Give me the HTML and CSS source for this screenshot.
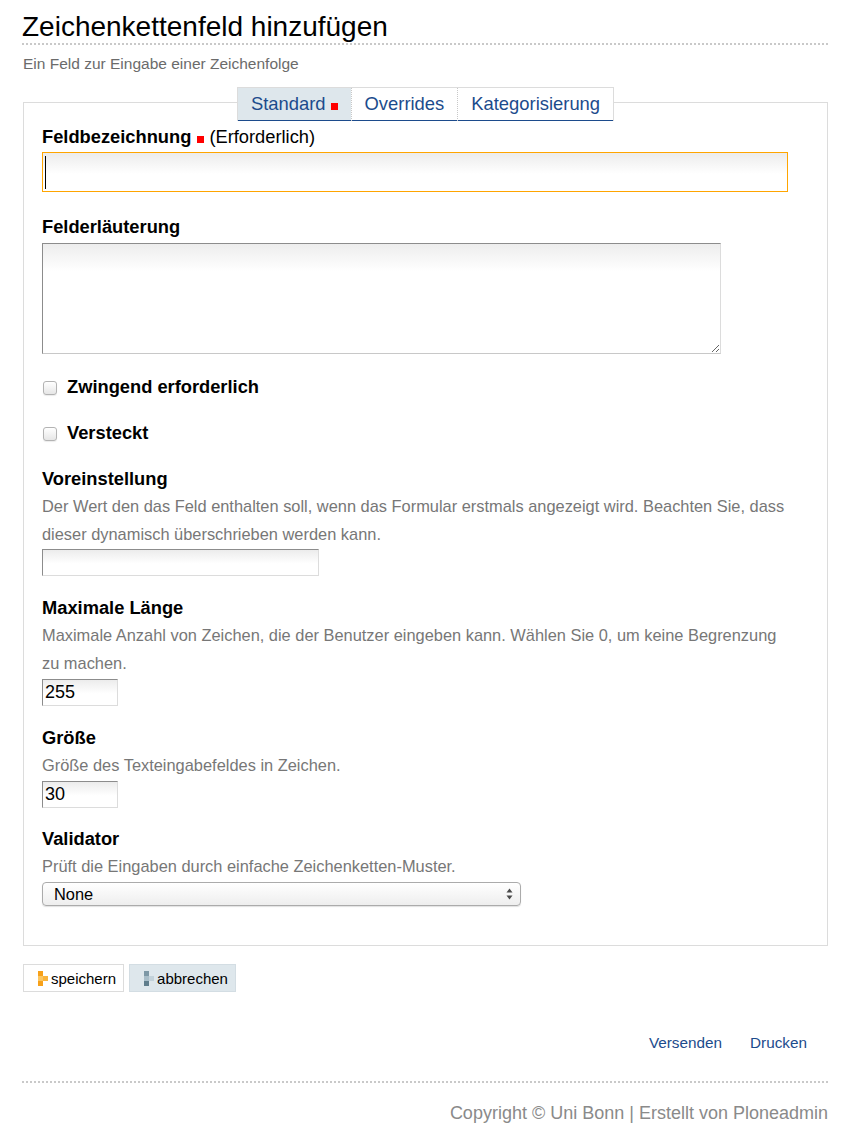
FILE: index.html
```html
<!DOCTYPE html>
<html lang="de">
<head>
<meta charset="utf-8">
<title>Zeichenkettenfeld hinzufügen</title>
<link rel="stylesheet" href="styles.css">
</head>
<body>
<div class="page">
  <h1 class="title">Zeichenkettenfeld hinzufügen</h1>
  <p class="lead">Ein Feld zur Eingabe einer Zeichenfolge</p>

  <form class="edit-form">
    <nav class="tabs">
      <div class="tab-list">
        <a class="tab is-selected" href="#">Standard<span class="req"></span></a>
        <a class="tab" href="#">Overrides</a>
        <a class="tab" href="#">Kategorisierung</a>
      </div>
    </nav>

    <div class="panel">
      <div class="fields">
        <div class="field field--first">
          <label class="field-label" for="title">Feldbezeichnung <span class="req req--label"></span><span class="required-note">(Erforderlich)</span></label>
          <div class="input-wrap">
            <input class="text-input text-input--focus" id="title" type="text">
            <span class="caret"></span>
          </div>
        </div>

        <div class="field field--area">
          <label class="field-label" for="description">Felderläuterung</label>
          <textarea class="textarea" id="description"></textarea>
        </div>

        <div class="field">
          <label class="check-row"><input class="checkbox" type="checkbox">Zwingend erforderlich</label>
        </div>

        <div class="field">
          <label class="check-row"><input class="checkbox" type="checkbox">Versteckt</label>
        </div>

        <div class="field">
          <label class="field-label" for="default">Voreinstellung</label>
          <p class="help">Der Wert den das Feld enthalten soll, wenn das Formular erstmals angezeigt wird. Beachten Sie, dass dieser dynamisch überschrieben werden kann.</p>
          <input class="text-input text-input--medium" id="default" type="text">
        </div>

        <div class="field">
          <label class="field-label" for="maxlength">Maximale Länge</label>
          <p class="help">Maximale Anzahl von Zeichen, die der Benutzer eingeben kann. Wählen Sie 0, um keine Begrenzung zu machen.</p>
          <input class="text-input text-input--small" id="maxlength" type="text" value="255">
        </div>

        <div class="field">
          <label class="field-label" for="size">Größe</label>
          <p class="help">Größe des Texteingabefeldes in Zeichen.</p>
          <input class="text-input text-input--small" id="size" type="text" value="30">
        </div>

        <div class="field field--last">
          <label class="field-label" for="validator">Validator</label>
          <p class="help">Prüft die Eingaben durch einfache Zeichenketten-Muster.</p>
          <div class="select-wrap">
            <select class="select" id="validator">
              <option>None</option>
            </select>
            <svg class="select-arrows" width="7" height="12" viewBox="0 0 7 12" aria-hidden="true">
              <path d="M3.5 0.5 L6.5 4.5 L0.5 4.5 Z" fill="#4a4a4a"/>
              <path d="M0.5 7.5 L6.5 7.5 L3.5 11.5 Z" fill="#4a4a4a"/>
            </svg>
          </div>
        </div>
      </div>
    </div>

    <div class="form-buttons">
      <button class="button button--save" type="button">
        <svg class="button-icon" width="10" height="15" viewBox="0 0 10 15" aria-hidden="true">
          <rect x="0" y="0" width="5" height="5" fill="#f7a11a"/>
          <rect x="0" y="5" width="5" height="5" fill="#fcc660"/>
          <rect x="5" y="5" width="5" height="5" fill="#f9b43c"/>
          <rect x="0" y="10" width="5" height="5" fill="#f7a11a"/>
        </svg>speichern</button>
      <button class="button button--cancel" type="button">
        <svg class="button-icon" width="10" height="15" viewBox="0 0 10 15" aria-hidden="true">
          <rect x="0" y="0" width="5" height="5" fill="#7d98a6"/>
          <rect x="0" y="5" width="5" height="5" fill="#a9bec9"/>
          <rect x="5" y="5" width="5" height="5" fill="#c3d2da"/>
          <rect x="0" y="10" width="5" height="5" fill="#5f7d8c"/>
        </svg>abbrechen</button>
    </div>
  </form>

  <ul class="doc-actions">
    <li><a href="#">Versenden</a></li>
    <li><a href="#">Drucken</a></li>
  </ul>

  <footer class="footer">Copyright © Uni Bonn | Erstellt von Ploneadmin</footer>
</div>
</body>
</html>
```

FILE: styles.css
```css
* {
  box-sizing: border-box;
}

body {
  margin: 0;
  background: #fff;
  color: #000;
  font-family: "Liberation Sans", Arial, Helvetica, sans-serif;
}

.page {
  margin: 0 21px 0 22px;
}

/* Heading */
.title {
  margin: 11px 0 0;
  font-size: 28px;
  line-height: 32px;
  font-weight: normal;
  border-bottom: 2px dotted #c9c9c9;
}

.lead {
  margin: 9px 0 0 1px;
  font-size: 15.5px;
  line-height: 20px;
  color: #6b6b6b;
}

/* Tabs sitting on the panel's top edge */
.tabs {
  position: relative;
  z-index: 1;
  display: flex;
  justify-content: center;
  margin: 13px 0 -19px 1px;
}

.tab-list {
  display: flex;
  background: #fff;
  border: 1px solid #dcdcdc;
  border-bottom: 0;
}

.tab {
  display: flex;
  align-items: baseline;
  padding: 6px 13px 7px 13px;
  font-size: 18.4px;
  line-height: 20px;
  color: #1c4b8c;
  text-decoration: none;
  box-shadow: inset 0 -1px 0 #1c4b8c;
}

.tab + .tab {
  border-left: 1px dotted #c8c8c8;
}

.tab.is-selected {
  background: #dee7ec;
}

.req {
  display: inline-block;
  width: 7px;
  height: 7px;
  background: #f00;
  margin-left: 5px;
}

.req--label {
  margin: 0 5px 0 1px;
}

/* Panel */
.panel {
  margin-left: 1px;
  border: 1px solid #dcdcdc;
  padding: 20px 39px 39px 18px;
}

.fields {
  display: flex;
  flex-direction: column;
  gap: 18px;
}

.field--first {
  margin-bottom: 3px;
}

.field--area {
  margin-bottom: 1px;
}

.field--last {
  margin-top: -1px;
}

.field-label {
  display: block;
  font-size: 18.3px;
  line-height: 27px;
  font-weight: bold;
}

.required-note {
  font-weight: normal;
}

.help {
  margin: 0;
  font-size: 16.4px;
  line-height: 28px;
  color: #777;
}

.input-wrap {
  position: relative;
  margin-top: 2px;
}

.text-input {
  display: block;
  height: 27px;
  margin: 1px 0 0;
  padding: 0 2px;
  font-family: "Liberation Sans", Arial, sans-serif;
  font-size: 18px;
  color: #000;
  border: 1px solid;
  border-color: #8c8c8c #dcdcdc #dcdcdc #8c8c8c;
  border-radius: 0;
  background: linear-gradient(#ececec, #fff 55%);
  outline: none;
}

.text-input--focus {
  width: 746px;
  height: 40px;
  margin: 0;
  border: 1px solid #ffa500;
}

.text-input--medium {
  width: 277px;
}

.text-input--small {
  width: 76px;
  margin-top: 2px;
}

.caret {
  position: absolute;
  left: 3px;
  top: 4px;
  width: 1px;
  height: 33px;
  background: #000;
}

.textarea {
  display: block;
  width: 679px;
  height: 111px;
  margin-top: 3px;
  border: 1px solid;
  border-color: #8c8c8c #dcdcdc #c8c8c8 #8c8c8c;
  border-radius: 0;
  background: linear-gradient(#ededed, #fff 25%);
  font-family: "Liberation Sans", Arial, sans-serif;
  font-size: 16px;
  outline: none;
}

.check-row {
  display: flex;
  align-items: center;
  height: 28px;
  font-size: 18.3px;
  font-weight: bold;
}

.checkbox {
  appearance: none;
  -webkit-appearance: none;
  width: 14px;
  height: 14px;
  margin: 1px 10px 0 1px;
  border: 1px solid #b3b3b3;
  border-radius: 3px;
  background: linear-gradient(#fff, #e6e6e6);
  box-shadow: 0 1px 1px rgba(0, 0, 0, 0.08);
}

/* Select with native-looking arrows */
.select-wrap {
  position: relative;
  width: 479px;
  margin-top: 2px;
}

.select {
  appearance: none;
  -webkit-appearance: none;
  display: block;
  width: 100%;
  height: 24px;
  padding: 0 0 0 11px;
  font-family: "Liberation Sans", Arial, sans-serif;
  font-size: 16.4px;
  color: #000;
  border: 1px solid #ababab;
  border-radius: 4px;
  background: linear-gradient(#fff, #eeeeee);
  box-shadow: 0 1px 1px rgba(0, 0, 0, 0.12);
  outline: none;
}

.select-arrows {
  position: absolute;
  right: 8px;
  top: 6px;
  pointer-events: none;
}

/* Form buttons */
.form-buttons {
  display: flex;
  gap: 5px;
  margin: 18px 0 0 1px;
}

.button {
  display: flex;
  align-items: center;
  height: 28px;
  padding: 0 7px 0 14px;
  font-family: "Liberation Sans", Arial, sans-serif;
  font-size: 15px;
  color: #000;
  border: 1px solid #dcdcdc;
  background: #fff;
  cursor: pointer;
}

.button--cancel {
  background: #dee7ec;
  border-color: #d3dde3;
}

.button-icon {
  display: block;
  margin-right: 3px;
}

/* Document actions */
.doc-actions {
  display: flex;
  justify-content: flex-end;
  gap: 28px;
  margin: 41px 0 0;
  padding: 0 21px 0 0;
  list-style: none;
  font-size: 15.3px;
  line-height: 20px;
}

.doc-actions a {
  color: #1c4b8c;
  text-decoration: none;
}

/* Footer */
.footer {
  margin-top: 28px;
  padding-top: 19px;
  border-top: 2px dotted #c9c9c9;
  text-align: right;
  font-size: 18px;
  line-height: 22px;
  color: #8a8a8a;
}
```
